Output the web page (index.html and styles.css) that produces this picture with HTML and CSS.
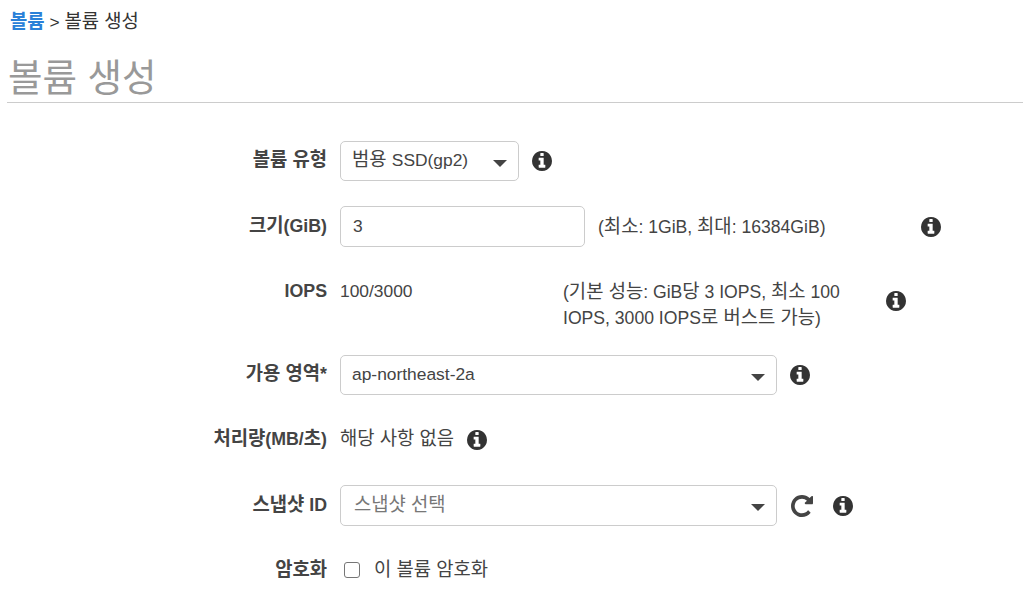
FILE: index.html
```html
<!DOCTYPE html>
<html lang="ko">
<head>
<meta charset="utf-8">
<title>볼륨 생성</title>
<link rel="stylesheet" href="styles.css">
</head>
<body>
<svg class="defs" width="0" height="0" aria-hidden="true">
  <symbol id="info" viewBox="128 128 1536 1536"><path d="M1152 1376v-160q0-14-9-23t-23-9h-96v-512q0-14-9-23t-23-9h-320q-14 0-23 9t-9 23v160q0 14 9 23t23 9h96v320h-96q-14 0-23 9t-9 23v160q0 14 9 23t23 9h448q14 0 23-9t9-23zm-128-896v-160q0-14-9-23t-23-9h-192q-14 0-23 9t-9 23v160q0 14 9 23t23 9h192q14 0 23-9t9-23zm640 416q0 209-103 385.5t-279.5 279.5-385.5 103-385.5-103-279.5-279.5-103-385.5 103-385.5 279.5-279.5 385.5-103 385.5 103 279.5 279.5 103 385.5z"/></symbol>
  <symbol id="refresh" viewBox="128 128 1536 1536"><path d="M1664 256v448q0 26-19 45t-45 19h-448q-42 0-59-40-17-39 14-69l138-138q-148-137-349-137-104 0-198.500 40.500t-163.500 109.500-109.500 163.500-40.500 198.500 40.500 198.500 109.500 163.500 163.500 109.500 198.500 40.500q119 0 225-52t179-147q7-10 23-12 15 0 25 9l137 138q9 8 9.500 20.500t-7.500 22.500q-109 132-264 204.500t-327 72.500q-156 0-298-61t-245-164-164-245-61-298 61-298 164-245 245-164 298-61q147 0 284.500 55.500t244.500 156.500l130-129q29-31 70-14 39 17 39 59z"/></symbol>
</svg>
<nav class="crumbs"><a href="#" class="ko">볼륨</a> &gt; <span class="ko">볼륨 생성</span></nav>
<h1 class="title">볼륨 생성</h1>
<form class="form">
  <div class="row">
    <label class="label"><span class="ko">볼륨 유형</span></label>
    <div class="control">
      <div class="select select-type" role="combobox"><span class="ko">범용</span> SSD(gp2)</div>
      <svg class="icon icon-after-type"><use href="#info"/></svg>
    </div>
  </div>
  <div class="row">
    <label class="label"><span class="ko">크기</span>(GiB)</label>
    <div class="control">
      <input class="input-size" value="3">
      <span class="hint hint-size">(<span class="ko">최소</span>: 1GiB, <span class="ko">최대</span>: 16384GiB)</span>
      <svg class="icon"><use href="#info"/></svg>
    </div>
  </div>
  <div class="row row-iops">
    <label class="label">IOPS</label>
    <div class="control control-top">
      <span class="value-iops">100/3000</span>
      <span class="hint hint-iops">(<span class="ko">기본 성능</span>: GiB<span class="ko">당</span> 3 IOPS, <span class="ko">최소</span> 100 IOPS, 3000 IOPS<span class="ko">로 버스트 가능</span>)</span>
      <svg class="icon icon-after-iops"><use href="#info"/></svg>
    </div>
  </div>
  <div class="row">
    <label class="label"><span class="ko">가용 영역</span>*</label>
    <div class="control">
      <div class="select select-wide" role="combobox">ap-northeast-2a</div>
      <svg class="icon icon-after-wide"><use href="#info"/></svg>
    </div>
  </div>
  <div class="row">
    <label class="label"><span class="ko">처리량</span>(MB/<span class="ko">초</span>)</label>
    <div class="control">
      <span class="ko lift">해당 사항 없음</span>
      <svg class="icon icon-after-text"><use href="#info"/></svg>
    </div>
  </div>
  <div class="row">
    <label class="label"><span class="ko">스냅샷</span> ID</label>
    <div class="control">
      <div class="select select-wide select-snap" role="combobox"><span class="ko placeholder">스냅샷 선택</span></div>
      <svg class="icon icon-refresh"><use href="#refresh"/></svg>
      <svg class="icon icon-after-refresh"><use href="#info"/></svg>
    </div>
  </div>
  <div class="row row-check">
    <label class="label"><span class="ko">암호화</span></label>
    <div class="control">
      <input type="checkbox" class="check">
      <span class="ko lift">이 볼륨 암호화</span>
    </div>
  </div>
</form>
</body>
</html>
```
FILE: styles.css
```css
* { box-sizing: border-box; }
html, body { margin: 0; height: 600px; overflow: hidden; }
body {
  background: #fff;
  color: #444;
  font-family: "Liberation Sans", "Noto Sans CJK KR", sans-serif;
  font-size: 17.4px;
  line-height: 24px;
}
.ko { font-size: 18.8px; }
.lift { padding-bottom: 2px; }
.defs { display: block; height: 0; }
.crumbs { padding: 10px 0 0 10px; height: 43px; color: #333; }
.crumbs a { color: #2a80d8; font-weight: 700; text-decoration: none; }
.title {
  margin: 0 0 0 7px;
  height: 60px;
  padding: 10px 0 0 1px;
  border-bottom: 1px solid #ccc;
  color: #999;
  font-size: 37.5px;
  font-weight: 400;
  line-height: 50px;
}
.form { display: flex; flex-direction: column; gap: 25px; padding-top: 38px; }
.row { display: flex; gap: 13px; align-items: center; min-height: 40px; }
.row-iops { height: 58px; align-items: flex-start; padding-top: 7px; }
.label { width: 327px; flex: none; padding-bottom: 2px; text-align: right; font-weight: 700; font-size: 17.8px; }
.row-iops .label { padding: 0; }
.control { display: flex; align-items: center; flex: 1; }
.control-top { align-items: flex-start; }
.select {
  position: relative;
  display: flex;
  align-items: center;
  gap: 0.3em;
  height: 40px;
  padding: 0 11px 2px;
  background: #fff;
  border: 1px solid #ccc;
  border-radius: 5px;
}
.select::after {
  content: "";
  position: absolute;
  right: 11px;
  top: 18px;
  border: 7.5px solid transparent;
  border-top: 7px solid #444;
  border-bottom: 0;
}
.select-type { width: 179px; }
.select-wide { width: 437px; padding: 0 11px 3px; }
.select-snap { height: 41px; padding: 0 13px 0; }
.placeholder { color: #777; position: relative; top: -1px; }
.input-size {
  width: 245px;
  height: 41px;
  padding: 0 12px;
  background: #fff;
  border: 1px solid #ccc;
  border-radius: 5px;
  color: #444;
  font: inherit;
  outline: none;
}
.hint { font-size: 17.6px; }
.hint-size { margin-left: 13px; width: 323px; flex: none; }
.hint-iops { margin-left: 151px; width: 323px; flex: none; line-height: 25px; }
.value-iops { width: 72px; flex: none; }
.icon { width: 20px; height: 20px; flex: none; fill: #333; }
.icon-refresh { width: 22px; height: 22px; margin-left: 14px; fill: #444; }
.icon-after-type { margin-left: 13px; }
.icon-after-iops { margin-top: 12px; }
.icon-after-wide { margin-left: 13px; }
.icon-after-text { margin-left: 13px; }
.icon-after-refresh { margin-left: 20px; }
.check {
  width: 16px;
  height: 16px;
  margin: 0 14px 2px 4px;
  appearance: none;
  background: #fff;
  border: 1px solid #767676;
  border-radius: 3px;
}
```
